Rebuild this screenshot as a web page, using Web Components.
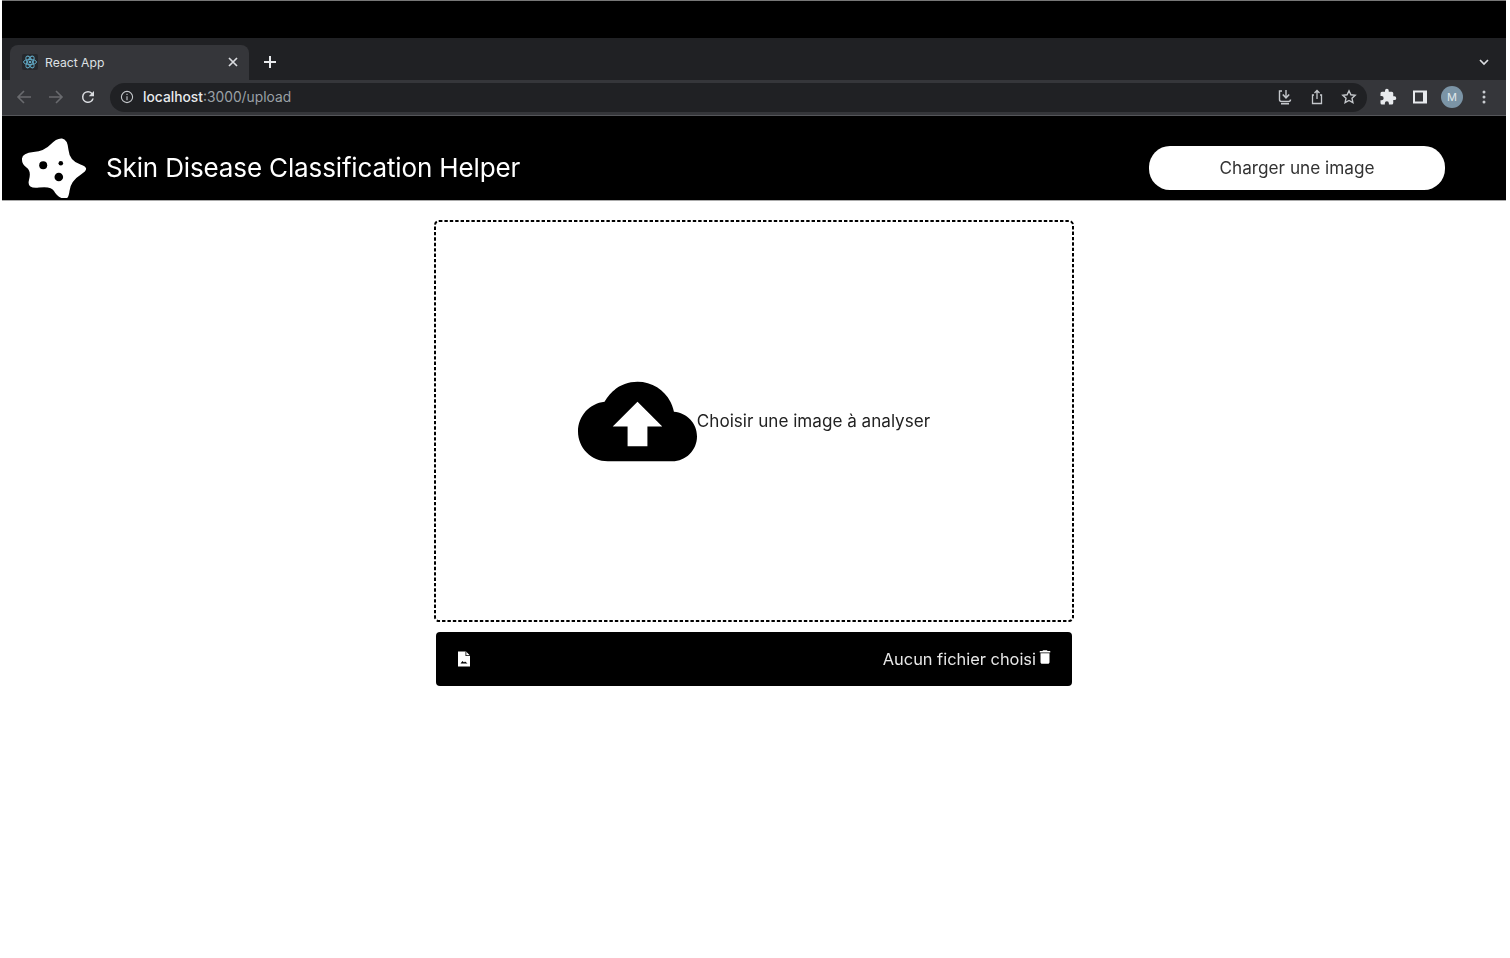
<!DOCTYPE html>
<html>
<head>
<meta charset="utf-8">
<title>React App</title>
<style>
html, body { margin: 0; padding: 0; background: #fff; }
body { font-family: Inter, "Liberation Sans", sans-serif; }
</style>
</head>
<body>
<lm-app></lm-app>
<script>
class BrowserChrome extends HTMLElement {
    connectedCallback() {
        this.root = this.attachShadow({ mode: "open" });
        this.root.innerHTML = `
<style>
:host { display: block; }
.top { height: 38px; box-sizing: border-box; background: #000; border-top: 1px solid #777; }
.strip { height: 42px; background: #202124; display: flex; align-items: flex-end; padding-left: 8px; padding-right: 16px; }
.tab { width: 239px; height: 35px; background: #35363a; border-radius: 8px 8px 0 0; display: flex; align-items: center; padding: 0 10px 1px 12px; box-sizing: border-box; color: #dee1e5; font: 12.2px Inter, sans-serif; }
.tab span { margin-left: 7px; flex: 1; }
.plus { margin: 0 0 10px 13px; display: flex; }
.chev { margin: 0 0 12px auto; display: flex; }
.bar { height: 36px; background: #35363a; display: flex; align-items: center; padding: 0 0 1px 13px; box-sizing: border-box; border-bottom: 1px solid #55565a; }
.nav { display: flex; gap: 14px; align-items: center; }
.omni { width: 1257px; height: 29px; margin-left: 13px; background: #202124; border-radius: 15px; display: flex; align-items: center; padding: 0 9px 0 10px; box-sizing: border-box; }
.url { margin-left: 9px; font: 13.8px Inter, sans-serif; color: #9aa0a6; }
.url b { font-weight: 500; color: #e8eaed; }
.omni .right { margin-left: auto; display: flex; gap: 14px; }
.exts { display: flex; align-items: center; gap: 14px; margin-left: 12px; }
.avatar { width: 22px; height: 22px; margin: 0 -2px; border-radius: 50%; background: #7b94a6; color: #dfe6ea; font: 11px Inter, sans-serif; display: flex; align-items: center; justify-content: center; }
svg { display: block; flex: none; }
</style>
<div class="top"></div>
<div class="strip">
  <div class="tab">
    <svg width="16" height="16" viewBox="0 0 16 16" fill="none" stroke="#61a8c4" stroke-width="1"><rect width="16" height="16" rx="2" fill="#26282c" stroke="none"/><ellipse cx="8" cy="8" rx="6.500" ry="2.600"/><ellipse cx="8" cy="8" rx="6.500" ry="2.600" transform="rotate(60 8 8)"/><ellipse cx="8" cy="8" rx="6.500" ry="2.600" transform="rotate(120 8 8)"/><circle cx="8" cy="8" r="1.300" fill="#61a8c4" stroke="none"/></svg>
    <span>React App</span>
    <svg width="12" height="12" viewBox="0 0 12 12" stroke="#dadce0" stroke-width="1.700"><path d="M2 2l8 8M10 2l-8 8"/></svg>
  </div>
  <div class="plus"><svg width="16" height="16" viewBox="0 0 16 16" stroke="#e8eaed" stroke-width="2"><path d="M8 2v12M2 8h12"/></svg></div>
  <div class="chev"><svg width="12" height="12" viewBox="0 0 12 12" fill="none" stroke="#dadce0" stroke-width="1.700"><path d="M2 4l4 4 4-4"/></svg></div>
</div>
<div class="bar">
  <div class="nav">
    <svg width="18" height="18" viewBox="0 0 18 18" fill="none" stroke="#696a6e" stroke-width="1.600"><path d="M16 9H3M9 3L3 9l6 6"/></svg>
    <svg width="18" height="18" viewBox="0 0 18 18" fill="none" stroke="#696a6e" stroke-width="1.600"><path d="M2 9h13M9 3l6 6-6 6"/></svg>
    <svg width="18" height="18" viewBox="0 0 24 24" fill="#dadce0"><path d="M17.650 6.350A7.960 7.960 0 0 0 12 4a8 8 0 1 0 7.730 10h-2.080A6 6 0 1 1 12 6c1.660 0 3.140.69 4.220 1.780L13 11h7V4l-2.350 2.350z"/></svg>
  </div>
  <div class="omni">
    <svg width="14" height="14" viewBox="0 0 14 14" fill="none" stroke="#c4c7cb" stroke-width="1.100"><circle cx="7" cy="7" r="5.600"/><path d="M7 6.200v4M7 3.800v1.200"/></svg>
    <div class="url"><b>localhost</b>:3000/upload</div>
    <div class="right">
      <svg width="18" height="18" viewBox="0 0 18 18" fill="none" stroke="#c4c7cb" stroke-width="1.400"><path d="M6 3H3.500v8.500c0 1.200.8 2 2 2h7c1.200 0 2-.8 2-2M5 15.800h8M10 2v7"/><path d="M6.800 6.500L10 9.800l3.200-3.300" stroke-width="1.600"/></svg>
      <svg width="18" height="18" viewBox="0 0 18 18" fill="none" stroke="#c4c7cb" stroke-width="1.300"><path d="M6 7H4.500v8.500h9V7H12M9 11V2.500M6.500 5L9 2.500 11.500 5"/></svg>
      <svg width="18" height="18" viewBox="0 0 18 18" fill="none" stroke="#c4c7cb" stroke-width="1.400"><path d="M9 2.800l1.900 4 4.300.5-3.200 3 .9 4.300L9 12.500l-3.900 2.100.9-4.300-3.200-3 4.300-.5z"/></svg>
    </div>
  </div>
  <div class="exts">
    <svg width="18" height="18" viewBox="0 0 24 24" fill="#e8eaed"><path d="M20.500 11H19V7a2 2 0 0 0-2-2h-4V3.500a2.500 2.500 0 0 0-5 0V5H4a2 2 0 0 0-2 2v3.800h1.500a2.700 2.700 0 0 1 0 5.400H2V20a2 2 0 0 0 2 2h3.800v-1.500a2.700 2.700 0 0 1 5.400 0V22H17a2 2 0 0 0 2-2v-4h1.500a2.500 2.500 0 0 0 0-5z"/></svg>
    <svg width="18" height="18" viewBox="0 0 18 18"><path fill="#e8eaed" fill-rule="evenodd" d="M2 2.500h14v13H2zM4 4.500v9h8v-9z"/></svg>
    <div class="avatar">M</div>
    <svg width="18" height="18" viewBox="0 0 18 18" fill="#c9ccd0"><circle cx="9" cy="4" r="1.500"/><circle cx="9" cy="9" r="1.500"/><circle cx="9" cy="14" r="1.500"/></svg>
  </div>
</div>`;
    }
}
window.customElements.define("lm-browser-chrome", BrowserChrome);

class AppHeader extends HTMLElement {
    connectedCallback() {
        this.root = this.attachShadow({ mode: "open" });
        this.root.innerHTML = `
<style>
:host { display: flex; align-items: center; box-sizing: border-box; height: 84px; background: #000; color: #fff; padding: 20px 61px 0 18px; box-shadow: 0 1px 0 #aaa; }
svg { display: block; flex: none; }
h1 { margin: 0 0 2px 18px; font: 400 26px Inter, sans-serif; letter-spacing: -0.14px; flex: 1; }
button { width: 296px; height: 44px; background: #fff; color: #333; border: 0; border-radius: 21px; font: 400 17.2px Inter, sans-serif; padding: 0 0 2px; }
</style>
<svg width="68" height="60" viewBox="-3.500 -3 68 60"><path fill="#fff" d="M-1.500 17.500Q-1 12 10 11Q21 10 27 3.500Q33 -3 38.500 -2.500Q44 -2 45 9Q46 20 57 23.500Q68 27 57.500 33.500Q47 40 46 50Q45 60 39 57.500Q33 55 30.500 50Q28 45 15.500 46.500Q3 48 5.500 39Q8 30 3 26.500Q-2 23 -1.500 17.500Z"/><circle cx="19.700" cy="24.300" r="4"/><circle cx="37.300" cy="22.300" r="2.300"/><circle cx="35.300" cy="36" r="4.300"/></svg>
<h1>Skin Disease Classification Helper</h1>
<button>Charger une image</button>`;
    }
}
window.customElements.define("lm-app-header", AppHeader);

class UploadPanel extends HTMLElement {
    connectedCallback() {
        this.root = this.attachShadow({ mode: "open" });
        this.root.innerHTML = `
<style>
:host { display: flex; flex-direction: column; align-items: center; padding-top: 20px; color: #000; }
.drop { position: relative; width: 640px; height: 402px; display: flex; align-items: center; justify-content: center; font: 400 17.1px Inter, sans-serif; color: #222; }
.drop span { margin-bottom: 2px; }
.outline { position: absolute; inset: 0; }
.file { width: 636px; height: 54px; margin-top: 10px; box-sizing: border-box; background: #000; border-radius: 4px; color: #e8e8e8; display: flex; align-items: center; padding: 0 18px 0 19px; font: 400 16.4px Inter, sans-serif; }
.name { margin-left: auto; }
.trash { margin-top: -4px; }
svg { display: block; flex: none; }
</style>
<div class="drop">
  <svg class="outline" width="640" height="402" fill="none" stroke="#000" stroke-width="2" stroke-dasharray="3.400 2"><rect x="1" y="1" width="638" height="400" rx="4"/></svg>
  <svg width="119" height="119" viewBox="0 0 24 24"><path d="M19.350 10.040C18.670 6.590 15.640 4 12 4 9.110 4 6.600 5.640 5.350 8.040 2.340 8.360 0 10.910 0 14c0 3.310 2.690 6 6 6h13c2.760 0 5-2.240 5-5 0-2.640-2.050-4.780-4.650-4.960zM14 13v4h-4v-4H7l5-5 5 5h-3z"/></svg>
  <span>Choisir une image à analyser</span>
</div>
<div class="file">
  <svg width="18" height="18" viewBox="0 0 18 18"><path fill="#fff" d="M3 1.500h8l4 4v11H3z"/><path fill="#000" d="M10.500 1.500v4.500H15v-.8h-3.700V1.500zM5.500 13.500l2-2.500 1.500 1.500 1-1 2.500 2z"/></svg>
  <span class="name">Aucun fichier choisi</span>
  <svg class="trash" width="18" height="18" viewBox="0 0 24 24" fill="#fff"><path d="M6 19c0 1.100.9 2 2 2h8c1.100 0 2-.9 2-2V7H6v12zM19 4h-3.500l-1-1h-5l-1 1H5v2h14V4z"/></svg>
</div>`;
    }
}
window.customElements.define("lm-upload-panel", UploadPanel);

class AppComponent extends HTMLElement {
    connectedCallback() {
        this.root = this.attachShadow({ mode: "open" });
        this.root.innerHTML = `
<style>
:host { display: block; padding: 0 4px 0 2px; filter: blur(0.4px); }
</style>
<lm-browser-chrome></lm-browser-chrome>
<lm-app-header></lm-app-header>
<lm-upload-panel></lm-upload-panel>`;
    }
}
window.customElements.define("lm-app", AppComponent);
</script>
</body>
</html>
